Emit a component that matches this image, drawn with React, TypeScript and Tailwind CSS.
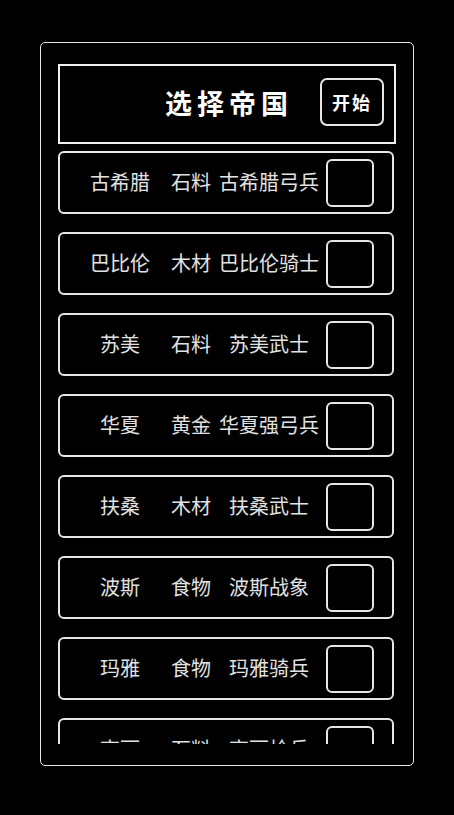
import React from "react";

const EMPIRES = [
  { name: "古希腊", res: "石料", unit: "古希腊弓兵" },
  { name: "巴比伦", res: "木材", unit: "巴比伦骑士" },
  { name: "苏美", res: "石料", unit: "苏美武士" },
  { name: "华夏", res: "黄金", unit: "华夏强弓兵" },
  { name: "扶桑", res: "木材", unit: "扶桑武士" },
  { name: "波斯", res: "食物", unit: "波斯战象" },
  { name: "玛雅", res: "食物", unit: "玛雅骑兵" },
  { name: "高丽", res: "石料", unit: "高丽枪兵" },
];

const font = { fontFamily: '"Noto Sans CJK SC", "Noto Sans", sans-serif' };

export default function App() {
  return (
    <div className="min-h-screen bg-black flex justify-center pt-[42px]" style={font}>
      <div className="w-[374px] h-[724px] border-[1.5px] border-[#e6e6e6] rounded-[5px] px-[17px] pt-[21px] pb-[21px] flex flex-col">
        <div className="flex-1 overflow-hidden flex flex-col">
          {/* Header */}
          <div className="h-[80px] shrink-0 border-2 border-[#f0f0f0] relative flex items-center justify-center">
            <span className="text-[27px] font-bold tracking-[5px] text-white pl-[4px] -mt-[1px]">选择帝国</span>
            <button className="absolute right-[10px] top-[12px] w-[64px] h-[48px] border-2 border-[#e6e6e6] rounded-[7px] text-white text-[18px] font-bold tracking-[2px] flex items-center justify-center">
              开始
            </button>
          </div>

          {/* Empire list */}
          <div className="mt-[7px] mr-[2px] flex flex-col gap-[18px]">
            {EMPIRES.map((e) => (
              <div
                key={e.name}
                className="h-[63px] shrink-0 border-2 border-[#e6e6e6] rounded-[6px] flex items-center text-[20px] text-[#e2e2e2]"
              >
                <div className="grid grid-cols-[80px_62px_94px] pl-[20px] -mt-[1px]">
                  <div className="flex justify-center whitespace-nowrap">{e.name}</div>
                  <div className="flex justify-center whitespace-nowrap">{e.res}</div>
                  <div className="flex justify-center whitespace-nowrap">{e.unit}</div>
                </div>
                <div className="ml-auto mr-[18px] w-[48px] h-[48px] border-2 border-[#e6e6e6] rounded-[6px]" />
              </div>
            ))}
          </div>
        </div>
      </div>
    </div>
  );
}
